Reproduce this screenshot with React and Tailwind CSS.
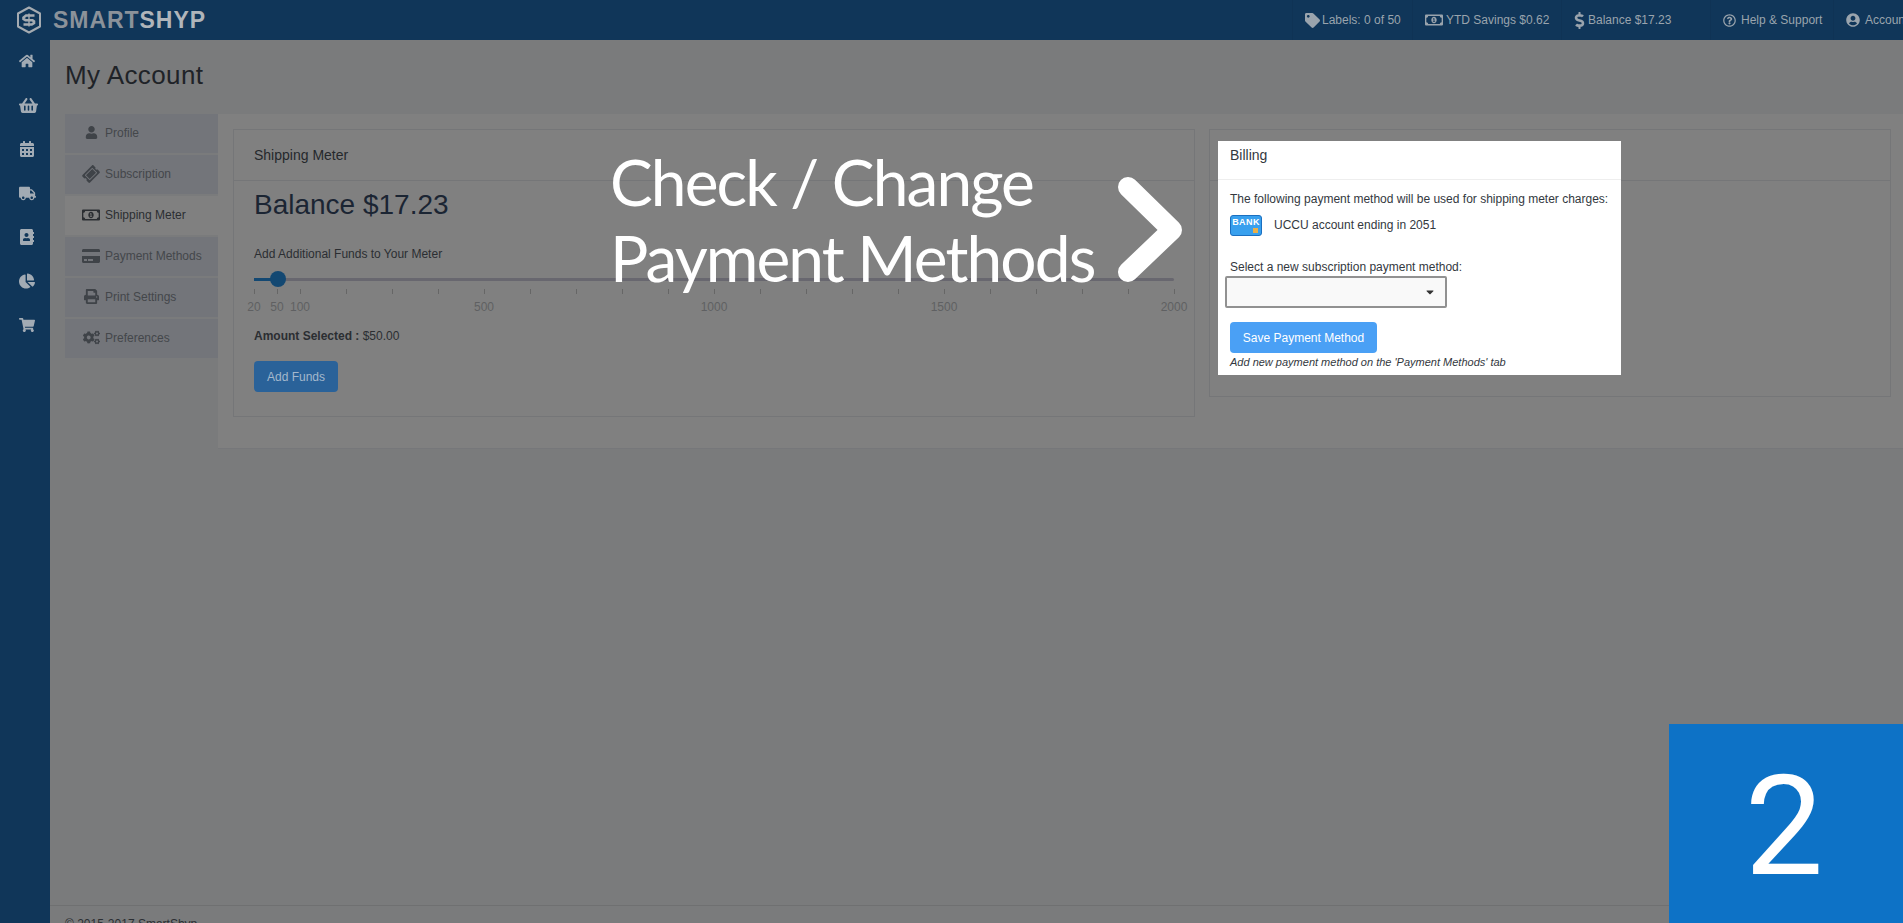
import React from 'react';
import {
  FaHome, FaShoppingBasket, FaCalendarAlt, FaTruck, FaAddressBook, FaChartPie, FaShoppingCart,
  FaUser, FaTicketAlt, FaRegMoneyBillAlt, FaCreditCard, FaPrint, FaCogs, FaTag, FaDollarSign,
  FaRegQuestionCircle, FaUserCircle, FaCaretDown,
} from 'react-icons/fa';

const sideIcons = [
  { icon: FaHome, size: 16 },
  { icon: FaShoppingBasket, size: 19 },
  { icon: FaCalendarAlt, size: 16 },
  { icon: FaTruck, size: 17 },
  { icon: FaAddressBook, size: 16 },
  { icon: FaChartPie, size: 16 },
  { icon: FaShoppingCart, size: 16 },
];

const tabs = [
  { label: 'Profile', icon: FaUser, size: 13, iconClass: '' },
  { label: 'Subscription', icon: FaTicketAlt, size: 16, iconClass: '-rotate-45' },
  { label: 'Shipping Meter', icon: FaRegMoneyBillAlt, size: 18, active: true, iconClass: '' },
  { label: 'Payment Methods', icon: FaCreditCard, size: 18, iconClass: '' },
  { label: 'Print Settings', icon: FaPrint, size: 15, iconClass: '' },
  { label: 'Preferences', icon: FaCogs, size: 17, iconClass: '' },
];

const stats = [
  { label: 'Labels: 0 of 50', icon: FaTag, size: 15, width: 'w-[120px]', gap: 'gap-[2px]', iconClass: '' },
  { label: 'YTD Savings $0.62', icon: FaRegMoneyBillAlt, size: 18, width: 'w-[149px]', gap: 'gap-[3px]', iconClass: '' },
  { label: 'Balance $17.23', icon: FaDollarSign, size: 17, width: 'w-[149px]', gap: 'gap-[3px]', iconClass: 'w-[11px]' },
  { label: 'Help & Support', icon: FaRegQuestionCircle, size: 13, width: 'w-[123px]', gap: 'gap-[5px]', iconClass: '' },
  { label: 'Account', icon: FaUserCircle, size: 14, width: 'w-[71px]', gap: 'gap-[5px]', iconClass: '' },
];

// 20 and 50 sit at half steps, everything after 100 is evenly spaced
const ticks = [254, 277, ...Array.from({ length: 20 }, (_, i) => 300 + i * 46)];
const tickLabels = [
  { text: '20', x: 254 },
  { text: '50', x: 277 },
  { text: '100', x: 300 },
  { text: '500', x: 484 },
  { text: '1000', x: 714 },
  { text: '1500', x: 944 },
  { text: '2000', x: 1174 },
];

const Logo = () => (
  <svg width="26" height="28" viewBox="0 0 26 28" fill="none" className="shrink-0">
    <path d="M13 1.5 L24 7.5 V20.5 L13 26.5 L2 20.5 V7.5 Z" stroke="#a5abb1" strokeWidth="2" strokeLinejoin="round" />
    <path d="M18.5 9.5 H10 L7.5 11.5 V13 L9.5 14.2 H16.5 L18 15.4 V17 L15.8 18.5 H7.5" stroke="#a5abb1" strokeWidth="2.6" />
    <path d="M13 7.5 V20.5" stroke="#a5abb1" strokeWidth="1.4" />
  </svg>
);

const Chevron = () => (
  <svg width="64" height="105" viewBox="0 0 64 105" fill="none">
    <path d="M10 10 L54 53 L10 95" stroke="#ffffff" strokeWidth="20" strokeLinecap="round" strokeLinejoin="round" />
  </svg>
);

const Card = ({ title, className, children }) => (
  <div className={`border border-[#757678] ${className}`}>
    <div className="h-[51px] border-b border-[#757678] pl-5 pt-[15px] text-sm leading-5 text-[#25282c]">{title}</div>
    {children}
  </div>
);

export default function App() {
  return (
    <div className="relative flex h-screen flex-col overflow-hidden bg-[#7a7b7c] font-['Liberation_Sans',Arial,sans-serif]">
      {/* Top bar */}
      <header className="flex h-10 shrink-0 items-center overflow-hidden bg-[#103659]">
        <div className="flex w-[1292px] shrink-0 items-center gap-[11px] pl-4">
          <Logo />
          <span className="text-[23px] font-bold tracking-[0.95px] text-[#8b929a]">
            SMART<span className="text-[#b0b5ba]">SHYP</span>
          </span>
        </div>
        {stats.map(({ label, icon: Icon, size, width, gap, iconClass }) => (
          <div key={label} className={`flex h-10 shrink-0 items-center border-l border-[#0f3355] pl-3 ${gap} ${width}`}>
            <Icon size={size} className={`shrink-0 text-[#9aa4ad] ${iconClass}`} />
            <span className="whitespace-nowrap text-xs text-[#9aa4ad]">{label}</span>
          </div>
        ))}
      </header>

      <div className="flex min-h-0 flex-1">
        {/* Icon rail */}
        <aside className="flex w-[50px] shrink-0 flex-col bg-[#103659] pl-[19px]">
          {sideIcons.map(({ icon: Icon, size }, idx) => (
            <div key={idx} className="flex h-[44px] items-center pb-[2px]">
              <Icon size={size} className="text-[#a2abb4]" />
            </div>
          ))}
        </aside>

        <main className="flex min-w-0 flex-1 flex-col">
          <div className="flex-1">
            <h1 className="h-[74px] pl-[15px] pt-[15px] text-[26px] leading-[40px] tracking-[0.4px] text-[#1f2328]">My Account</h1>

            <div className="flex">
              {/* Tabs */}
              <nav className="flex w-[168px] shrink-0 flex-col gap-[2px] pl-[15px]">
                {tabs.map(({ label, icon: Icon, size, active, iconClass }) => (
                  <div
                    key={label}
                    className={`flex h-[39px] items-center pb-[2px] text-xs ${active ? 'bg-[#808080] text-[#2b2e32]' : 'bg-[#73757a] text-[#44474b]'}`}
                  >
                    <span className="ml-[17px] mr-[5px] flex w-[18px] shrink-0 justify-center">
                      <Icon size={size} className={`${iconClass} ${active ? 'text-[#2b2e32]' : 'text-[#3f4348]'}`} />
                    </span>
                    {label}
                  </div>
                ))}
              </nav>

              {/* Panel */}
              <section className="flex h-[335px] flex-1 gap-[14px] border-b border-[#76777a] bg-[#808080] pl-[15px] pr-3 pt-[15px]">
                <Card title="Shipping Meter" className="h-[288px] w-[962px] shrink-0">
                  <div className="px-5">
                    <div className="pt-[8px] text-[28px] leading-[32px] text-[#1b2533]">Balance $17.23</div>
                    <div className="pt-[25px] text-xs leading-4 text-[#2b2e32]">Add Additional Funds to Your Meter</div>

                    <div className="relative mt-[16px] h-[3px] w-[920px] rounded bg-[#68676f]">
                      <div className="absolute left-0 top-0 h-[3px] w-6 bg-[#134872]" />
                      <div className="absolute left-4 top-[-7px] size-[16px] rounded-full bg-[#134872]" />
                      {ticks.map(x => (
                        <div
                          key={x}
                          className="absolute top-[11px] h-[5px] w-px bg-[#666666]"
                          style={{ left: x - 254 }}
                        />
                      ))}
                      {tickLabels.map(({ text, x }) => (
                        <span
                          key={text}
                          className="absolute top-[21px] -translate-x-1/2 text-xs leading-4 text-[#5f6062]"
                          style={{ left: x - 254 }}
                        >
                          {text}
                        </span>
                      ))}
                    </div>

                    <div className="pt-[47px] text-xs leading-4 text-[#2b2e32]">
                      <b>Amount Selected : </b>$50.00
                    </div>
                    <button className="mt-[17px] h-[31px] w-[84px] rounded bg-[#2a6299] text-xs text-[#a4b8cc]">Add Funds</button>
                  </div>
                </Card>
                <Card title="" className="h-[268px] flex-1" />
              </section>
            </div>
          </div>

          <footer className="h-[18px] shrink-0 border-t border-[#6f7071] pl-[15px] pt-[10px] text-xs leading-4 text-[#2b2e32]">
            © 2015-2017 SmartShyp
          </footer>
        </main>
      </div>

      {/* Tutorial callout laid over the dimmed page */}
      <div className="absolute left-[610px] top-[144px] text-[64px] leading-[76px] tracking-[-1.9px] text-white font-['Lato',sans-serif]">
        Check / Change
        <br />
        Payment Methods
      </div>
      <div className="absolute left-[1118px] top-[177px]">
        <Chevron />
      </div>

      {/* Highlighted billing block */}
      <div className="absolute left-[1218px] top-[141px] h-[234px] w-[403px] bg-white text-[#33383e]">
        <div className="h-[39px] border-b border-[#eeeeee] pl-3 pt-1 text-sm leading-5">Billing</div>
        <div className="pl-3 pt-[11px] text-xs">
          <p className="leading-4">The following payment method will be used for shipping meter charges:</p>
          <div className="mt-[8px] flex items-center gap-3">
            <div className="relative h-[21px] w-[32px] rounded-[3px] border border-[#1b6fc0] bg-[#38a0ee] text-center">
              <span className="block text-[9px] font-bold leading-[13px] tracking-[0.4px] text-white">BANK</span>
              <span className="absolute bottom-[2px] right-[3px] size-[5px] bg-[#e8b04a]" />
            </div>
            <span className="-mt-[2px] leading-4">UCCU account ending in 2051</span>
          </div>
          <p className="mb-px mt-[23px] leading-4">Select a new subscription payment method:</p>
          <div className="-ml-[5px] flex h-[32px] w-[222px] items-center justify-end rounded-[2px] border-2 border-[#919191] bg-[#f9f9f9] pr-[9px]">
            <FaCaretDown size={12} className="text-[#333333]" />
          </div>
          <button className="mt-[14px] block h-[31px] w-[147px] rounded bg-[#4aa0f5] text-xs text-white">Save Payment Method</button>
          <p className="mt-px text-[11px] italic leading-[16px]">Add new payment method on the &apos;Payment Methods&apos; tab</p>
        </div>
      </div>

      {/* Step number */}
      <div className="absolute bottom-0 right-0 flex h-[199px] w-[234px] items-center justify-center bg-[#0d72c6] pr-[4px] pt-[5px] text-[140px] leading-none text-white font-['Roboto',sans-serif]">
        2
      </div>
    </div>
  );
}
